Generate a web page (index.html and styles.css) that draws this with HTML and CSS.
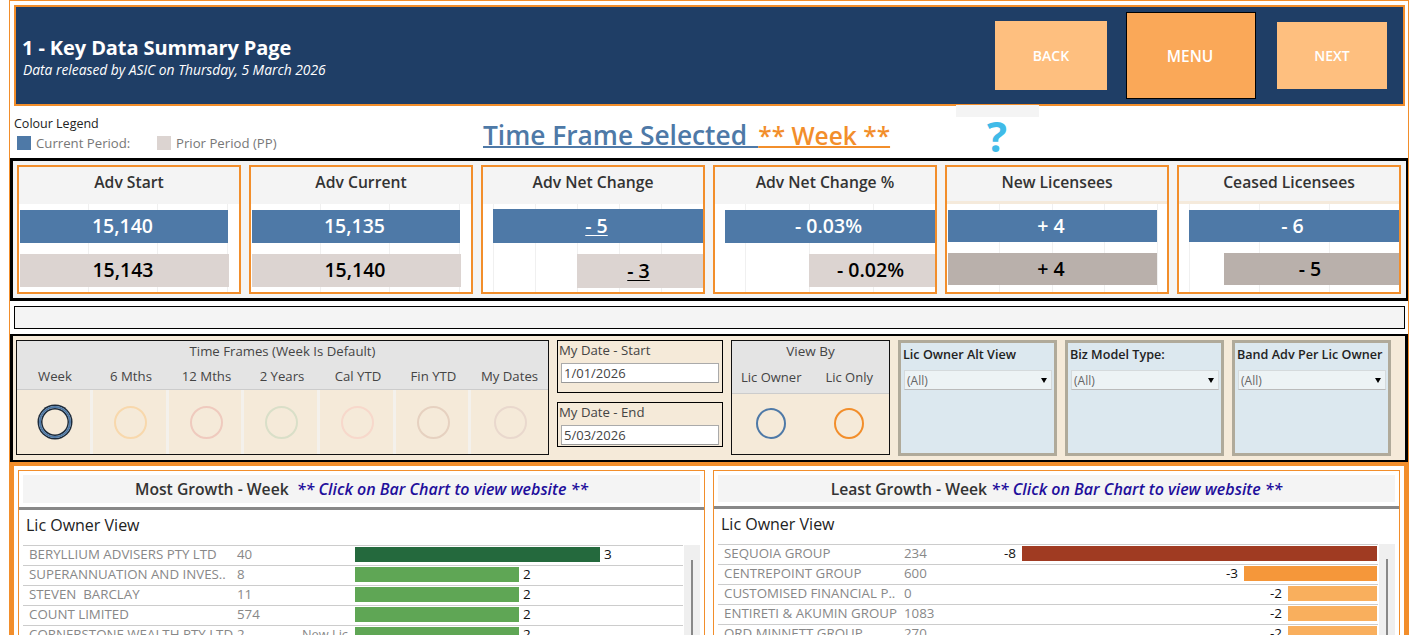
FILE: index.html
```html
<!DOCTYPE html>
<html lang="en">
<head>
<meta charset="utf-8">
<title>Key Data Summary</title>
<link rel="stylesheet" href="styles.css">
</head>
<body>
<div class="frame">
  <header class="banner">
    <div class="banner-text">
      <h1>1 - Key Data Summary Page</h1>
      <p>Data released by ASIC on Thursday, 5 March 2026</p>
    </div>
    <div class="nav">
      <a class="nav-btn back">BACK</a>
      <a class="nav-btn menu">MENU</a>
      <a class="nav-btn next">NEXT</a>
    </div>
  </header>

  <section class="titlebar">
    <div class="legend">
      <div class="legend-title">Colour Legend</div>
      <div class="legend-row">
        <span class="swatch cur"></span><span class="legend-a">Current Period:</span>
        <span class="swatch pri"></span><span>Prior Period (PP)</span>
      </div>
    </div>
    <div class="tf-title"><span class="tf-blue">Time Frame Selected&nbsp;&#8201;</span><span class="tf-orange">** Week **</span></div>
    <div class="help">?</div>
    <div class="patch"></div>
  </section>

  <section class="kpis">
    <article class="card">
      <h2>Adv Start</h2>
      <div class="plot">
        <i class="gl" style="left:69px"></i><i class="gl" style="left:138px"></i><i class="gl" style="left:208px"></i>
        <div class="bar blue" style="margin-left:1px;width:208px">15,140</div>
        <div class="bar grey" style="margin-left:1px;width:209px">15,143</div>
      </div>
    </article>
    <article class="card">
      <h2>Adv Current</h2>
      <div class="plot">
        <i class="gl" style="left:69px"></i><i class="gl" style="left:138px"></i><i class="gl" style="left:208px"></i>
        <div class="bar blue" style="margin-left:1px;width:208px">15,135</div>
        <div class="bar grey" style="margin-left:1px;width:209px">15,140</div>
      </div>
    </article>
    <article class="card">
      <h2>Adv Net Change</h2>
      <div class="plot tall">
        <i class="gl" style="left:10px"></i><i class="gl" style="left:52px"></i><i class="gl" style="left:94px"></i><i class="gl" style="left:136px"></i><i class="gl" style="left:178px"></i>
        <div class="bar blue" style="margin-left:10px;width:210px"><u>- 5</u></div>
        <div class="bar grey" style="margin-left:94px;width:126px"><u>- 3</u></div>
      </div>
    </article>
    <article class="card">
      <h2>Adv Net Change %</h2>
      <div class="plot">
        <i class="gl" style="left:30px"></i><i class="gl" style="left:94px"></i><i class="gl" style="left:158px"></i>
        <div class="bar blue" style="margin-left:10px;width:210px">- 0.03%</div>
        <div class="bar grey" style="margin-left:94px;width:126px">- 0.02%</div>
      </div>
    </article>
    <article class="card peach">
      <h2>New Licensees</h2>
      <div class="plot short">
        <i class="gl" style="left:52px"></i><i class="gl" style="left:105px"></i><i class="gl" style="left:157px"></i><i class="gl" style="left:210px"></i>
        <div class="bar blue" style="margin-left:1px;width:209px">+ 4</div>
        <div class="bar dark" style="margin-left:1px;width:209px">+ 4</div>
      </div>
    </article>
    <article class="card peach">
      <h2>Ceased Licensees</h2>
      <div class="plot short">
        <i class="gl" style="left:10px"></i><i class="gl" style="left:80px"></i><i class="gl" style="left:150px"></i>
        <div class="bar blue" style="margin-left:10px;width:210px">- 6</div>
        <div class="bar dark" style="margin-left:45px;width:175px">- 5</div>
      </div>
    </article>
  </section>

  <div class="spacer"></div>

  <section class="filters">
    <div class="timeframes">
      <div class="fhead">
        <div class="fhead-title">Time Frames (Week Is Default)</div>
        <div class="tf-labels">
          <span>Week</span><span>6 Mths</span><span>12 Mths</span><span>2 Years</span><span>Cal YTD</span><span>Fin YTD</span><span>My Dates</span>
        </div>
      </div>
      <div class="tf-radios">
        <div class="tf-cell"><span class="radio selected"></span></div>
        <div class="tf-cell"><span class="radio c1"></span></div>
        <div class="tf-cell"><span class="radio c2"></span></div>
        <div class="tf-cell"><span class="radio c3"></span></div>
        <div class="tf-cell"><span class="radio c4"></span></div>
        <div class="tf-cell"><span class="radio c5"></span></div>
        <div class="tf-cell"><span class="radio c6"></span></div>
      </div>
    </div>
    <div class="dates">
      <div class="datebox start"><label>My Date - Start</label><div class="dateinput">1/01/2026</div></div>
      <div class="datebox end"><label>My Date - End</label><div class="dateinput">5/03/2026</div></div>
    </div>
    <div class="viewby">
      <div class="fhead vb">
        <div class="fhead-title">View By</div>
        <div class="vb-labels"><span>Lic Owner</span><span>Lic Only</span></div>
      </div>
      <div class="vb-radios">
        <span class="radio small vblue"></span><span class="radio small vorange"></span>
      </div>
    </div>
    <div class="dd-panel">
      <div class="dd-title">Lic Owner Alt View</div>
      <div class="dd"><span>(All)</span><b></b></div>
    </div>
    <div class="dd-panel">
      <div class="dd-title">Biz Model Type:</div>
      <div class="dd"><span>(All)</span><b></b></div>
    </div>
    <div class="dd-panel">
      <div class="dd-title">Band Adv Per Lic Owner</div>
      <div class="dd"><span>(All)</span><b></b></div>
    </div>
  </section>

  <section class="charts">
    <div class="panel most">
      <div class="panel-head"><strong>Most Growth - Week</strong>&nbsp;&nbsp;<em>** Click on Bar Chart to view website **</em></div>
      <div class="rule"></div>
      <h3>Lic Owner View</h3>
      <div class="table">
        <div class="rows">
          <div class="row"><span class="nm">BERYLLIUM ADVISERS PTY LTD</span><span class="num">40</span><span class="tag"></span><span class="fill g3" style="width:245px"></span><span class="val">3</span></div>
          <div class="row"><span class="nm">SUPERANNUATION AND INVES..</span><span class="num">8</span><span class="tag"></span><span class="fill g2" style="width:164px"></span><span class="val">2</span></div>
          <div class="row"><span class="nm">STEVEN&nbsp; BARCLAY</span><span class="num">11</span><span class="tag"></span><span class="fill g2" style="width:164px"></span><span class="val">2</span></div>
          <div class="row"><span class="nm">COUNT LIMITED</span><span class="num">574</span><span class="tag"></span><span class="fill g2" style="width:164px"></span><span class="val">2</span></div>
          <div class="row"><span class="nm">CORNERSTONE WEALTH PTY LTD</span><span class="num">2</span><span class="tag">New Lic</span><span class="fill g2" style="width:164px"></span><span class="val">2</span></div>
        </div>
        <div class="scroll"><span></span></div>
      </div>
    </div>
    <div class="panel least">
      <div class="panel-head"><strong>Least Growth - Week</strong>&nbsp;<em>** Click on Bar Chart to view website **</em></div>
      <div class="rule"></div>
      <h3>Lic Owner View</h3>
      <div class="table">
        <div class="rows">
          <div class="row"><span class="nm">SEQUOIA GROUP</span><span class="num">234</span><span class="neg"><span class="val">-8</span><span class="fill r3" style="width:355px"></span></span></div>
          <div class="row"><span class="nm">CENTREPOINT GROUP</span><span class="num">600</span><span class="neg"><span class="val">-3</span><span class="fill r2" style="width:133px"></span></span></div>
          <div class="row"><span class="nm">CUSTOMISED FINANCIAL P..</span><span class="num">0</span><span class="neg"><span class="val">-2</span><span class="fill r1" style="width:89px"></span></span></div>
          <div class="row"><span class="nm">ENTIRETI &amp; AKUMIN GROUP</span><span class="num">1083</span><span class="neg"><span class="val">-2</span><span class="fill r1" style="width:89px"></span></span></div>
          <div class="row"><span class="nm">ORD MINNETT GROUP</span><span class="num">270</span><span class="neg"><span class="val">-2</span><span class="fill r1" style="width:89px"></span></span></div>
        </div>
        <div class="scroll"><span></span></div>
      </div>
    </div>
  </section>
</div>
</body>
</html>
```

FILE: styles.css
```css
* { box-sizing: border-box; }
html, body { margin: 0; height: 635px; overflow: hidden; background: #fff; }
body { font-family: "Open Sans", "Noto Sans", sans-serif; color: #333; }

.frame {
  margin-left: 9px;
  width: 1400px;
  height: 635px;
  padding-top: 5px;
  border: 1px solid #f28e2b;
  border-width: 1px 1px 0;
  overflow: hidden;
}

/* banner */
.banner {
  margin-left: 4px;
  width: 1391px;
  height: 101px;
  margin-top: -1px;
  background: #1f3e66;
  border: 2px solid #f28e2b;
  display: flex;
  align-items: center;
  justify-content: space-between;
  color: #fff;
}
.banner-text { padding: 2px 0 0 7px; }
.banner h1 { margin: 0 0 0 -1px; font-size: 20px; line-height: 26px; font-weight: 700; letter-spacing: -0.1px; }
.banner p { margin: 0; font-size: 13.8px; line-height: 18px; font-style: italic; }
.nav { display: flex; align-items: center; margin-right: 16px; }
.nav-btn { display: flex; align-items: center; justify-content: center; color: #fff; font-weight: 600; font-size: 14px; }
.back { width: 112px; height: 69px; background: #febf7f; margin-right: 19px; }
.menu { width: 130px; height: 87px; background: #faa858; border: 1px solid #000; margin-right: 21px; font-size: 15.5px; padding-right: 2px; }
.next { width: 110px; height: 67px; background: #febf7f; }

/* title bar */
.titlebar { position: relative; height: 52px; margin-left: 4px; display: flex; }
.legend { width: 469px; padding-top: 10px; font-size: 13.2px; }
.legend-title { line-height: 15px; color: #222; font-size: 12.5px; }
.legend-row { display: flex; align-items: center; height: 14px; margin-top: 5px; color: #777; }
.swatch { width: 14px; height: 14px; margin: 0 5px 0 3px; }
.swatch.cur { background: #4e79a7; }
.swatch.pri { background: #dcd4d1; margin-left: 0; }
.legend-a { width: 121px; }
.tf-title { font-size: 26.3px; line-height: 34px; font-weight: 600; padding-top: 12px; white-space: nowrap; }
.tf-blue { color: #4e79a7; text-decoration: underline; text-decoration-thickness: 1.5px; }
.tf-orange { color: #f28e2b; font-size: 24.5px; text-decoration: underline; text-decoration-thickness: 1.5px; }
.help { margin-left: 97px; padding-top: 5px; font-size: 42px; line-height: 50px; font-weight: 700; color: #40bbe8; }
.patch { position: absolute; left: 942px; top: -1px; width: 83px; height: 12px; background: #f4f4f4; }

/* KPI cards */
.kpis {
  width: 1399px;
  height: 143px;
  border: 3px solid #000;
  background: #f4f4f4;
  padding: 4px;
  display: flex;
  gap: 8px;
}
.card { width: 224px; height: 129px; border: 2px solid #f28e2b; background: #fff; }
.card h2 { margin: 0; height: 37px; background: #f4f4f4; font-size: 15.7px; line-height: 30px; font-weight: 600; text-align: center; color: #333; }
.card.peach h2 { border-bottom: 3px solid #f5eadb; }
.plot { position: relative; height: 88px; padding-top: 6px; overflow: hidden; }
.plot.tall { padding-top: 5px; }
.plot.short .bar { height: 32px; }
.gl { position: absolute; top: 0; bottom: 0; width: 1px; background: #f0f0f0; }
.bar { position: relative; height: 33px; margin-bottom: 11px; padding: 0 3px 2px 0; display: flex; align-items: center; justify-content: center; font-size: 19.5px; font-weight: 600; }
.plot.tall .bar { height: 34px; }
.bar.blue { background: #4e79a7; color: #fff; }
.bar.grey { background: #dcd4d1; color: #000; }
.bar.dark { background: #b9b0ab; color: #000; }
.bar u { text-underline-offset: 2px; text-decoration-thickness: 1px; }

.spacer { margin: 5px 0 5px 4px; width: 1391px; height: 23px; border: 1px solid #000; background: #f4f4f4; }

/* filters */
.filters {
  width: 1398px;
  height: 128px;
  border: solid #000;
  border-width: 2px 3px;
  background: #f5ead9;
  padding: 4px 3px;
  display: flex;
  gap: 8px;
  align-items: flex-start;
  font-size: 13.2px;
  color: #444;
}
.timeframes { width: 533px; height: 115px; border: 1px solid #111; display: flex; flex-direction: column; }
.fhead { height: 49px; background: #e4e4e4; border-bottom: 1px solid #ccc; text-align: center; }
.fhead-title { line-height: 21px; }
.tf-labels { display: grid; grid-template-columns: 76px 76px 75px 76px 76px 75px 1fr; line-height: 28px; }
.tf-radios { flex: 1; display: grid; grid-template-columns: 76px 76px 75px 76px 76px 75px 1fr; }
.tf-cell { display: flex; align-items: center; justify-content: center; border-right: 3px solid #f4f1ec; padding-left: 2px; }
.tf-cell:last-child { border-right: 0; }
.radio { display: block; width: 33px; height: 33px; border-radius: 50%; border: 2px solid; }
.radio.selected { width: 32px; height: 32px; border: 2.5px solid #4e79a7; box-shadow: 0 0 0 1.5px #1c2a3a, inset 0 0 0 1.5px #1c2a3a; }
.c1 { border-color: #f8d8ac; }
.c2 { border-color: #efcabe; }
.c3 { border-color: #d9dfc8; }
.c4 { border-color: #f7d8cb; }
.c5 { border-color: #e6d1c0; }
.c6 { border-color: #e9d8cd; }

.dates { width: 166px; display: flex; flex-direction: column; gap: 9px; }
.datebox { border: 1px solid #000; padding: 0 3px; }
.datebox.start { height: 53px; }
.datebox.end { height: 45px; }
.datebox label { display: block; line-height: 19px; margin: 0 0 3px -2px; }
.dateinput { height: 20px; background: #fff; border: 1px solid #aaa; border-bottom-color: #999; line-height: 18px; padding-left: 2px; font-size: 13px; }

.viewby { width: 159px; height: 115px; border: 1px solid #111; display: flex; flex-direction: column; }
.fhead.vb { height: 53px; }
.viewby .fhead-title { line-height: 21px; font-size: 13.5px; }
.vb-labels { display: flex; justify-content: space-between; padding: 0 16px 0 9px; line-height: 30px; font-size: 13px; }
.vb-radios { flex: 1; display: flex; align-items: center; justify-content: center; gap: 48px; padding: 0 2px 2px 0; }
.radio.small { width: 30px; height: 31px; }
.vblue { border-color: #4e79a7; }
.vorange { border-color: #f28e2b; }

.dd-panel { width: 159px; height: 116px; border: 3px solid #b0aa9a; background: #dce8ef; padding: 0 2px 0 3px; }
.dd-title { font-weight: 600; color: #222; font-size: 12.6px; line-height: 24px; margin-left: -1px; white-space: nowrap; }
.dd { display: flex; align-items: center; justify-content: space-between; height: 20px; margin-top: 3px; background: #edf3f5; border: 1px solid #d5dadc; border-bottom-color: #bbb; padding: 0 4px 0 2px; font-size: 12px; color: #666; }
.dd b { width: 0; height: 0; border: 3.5px solid transparent; border-top: 5px solid #000; border-bottom: 0; }

/* charts */
.charts {
  width: 1398px;
  height: 200px;
  border: solid #f28e2b;
  border-width: 4px 4px 0;
  padding: 4px 0 0 4px;
  display: flex;
  gap: 8px;
  background: #fff;
}
.panel { border: 1px solid #f28e2b; width: 687px; height: 180px; overflow: hidden; }
.panel-head { margin: 4px 4px 0; height: 28px; background: #f4f4f4; text-align: center; line-height: 29px; font-size: 15.7px; white-space: nowrap; }
.least .panel-head { height: 27px; }
.panel-head strong { font-weight: 600; color: #333; }
.panel-head em { font-weight: 600; font-style: italic; color: #1f0f9c; font-size: 16px; }
.rule { height: 3px; margin-top: 4px; background: #888; }
.panel h3 { margin: 0; padding-left: 7px; height: 35px; font-size: 16px; line-height: 30px; font-weight: 400; color: #222; }
.table { display: flex; margin-left: 4px; }
.rows { flex: 1; }
.row { display: flex; align-items: center; height: 20px; border-top: 1px solid #ccc; padding: 0 0 2px 6px; font-size: 13.3px; line-height: 17px; color: #888; white-space: nowrap; }
.nm { width: 208px; flex: none; overflow: hidden; }
.num { width: 45px; flex: none; }
.tag { width: 66px; flex: none; text-align: right; font-size: 12.8px; margin-right: 7px; }
.fill { display: block; height: 15px; flex: none; }
.val { color: #111; font-size: 13.5px; margin-left: 4px; }
.g3 { background: #24693d; }
.g2 { background: #5fa655; }
.r3 { background: #a03b22; }
.r2 { background: #f5973a; }
.r1 { background: #f9af5d; }
.least .nm { width: 180px; }
.least .num { width: 48px; }
.neg { flex: 1; display: flex; justify-content: flex-end; align-items: center; margin-right: 1px; }
.neg .val { margin: 0 6px 0 0; }
.scroll { width: 16px; margin: 0 4px 0 1px; background: #efefef; padding-top: 15px; display: flex; justify-content: center; }
.scroll span { display: block; width: 2px; height: 100%; background: #888; }
```
